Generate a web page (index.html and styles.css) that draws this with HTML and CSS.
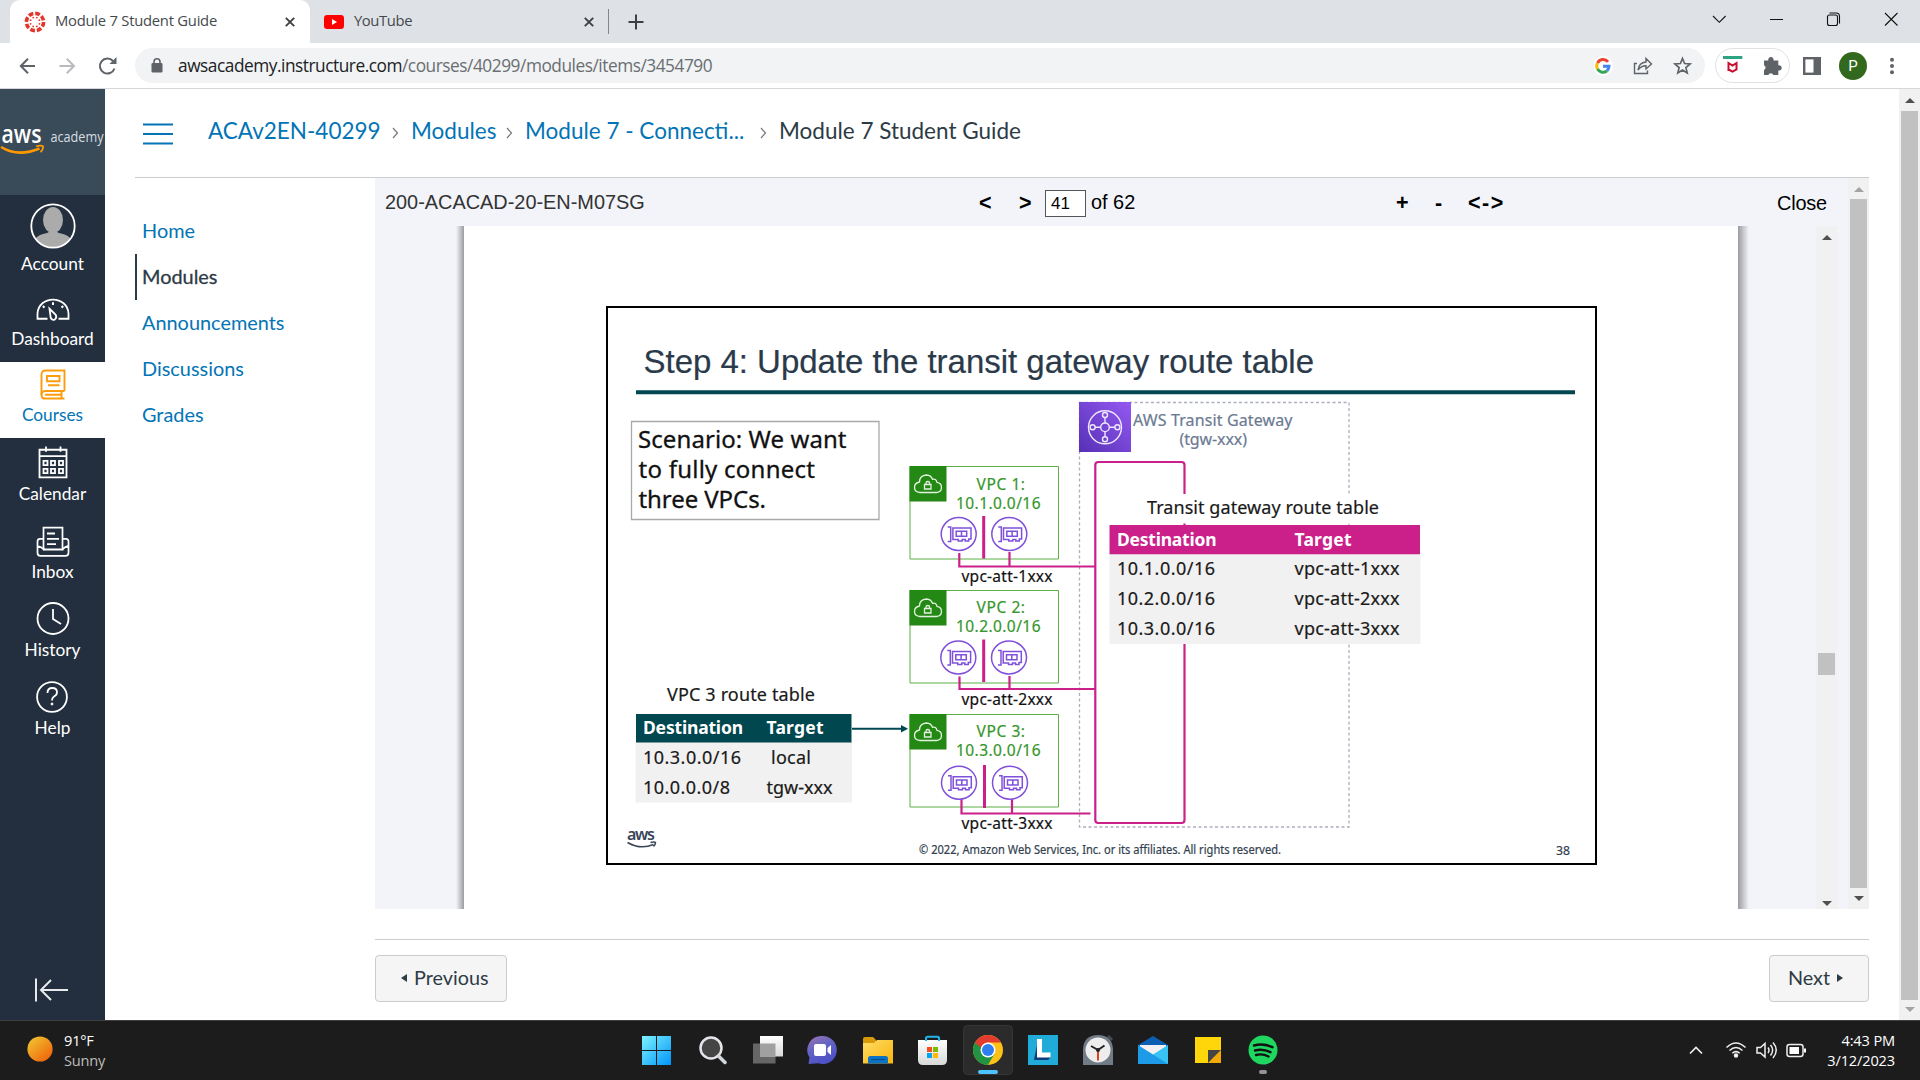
FILE: index.html
```html
<!DOCTYPE html>
<html lang="en">
<head>
<meta charset="utf-8">
<title>Module 7 Student Guide</title>
<link rel="stylesheet" href="styles.css">
</head>
<body>
<div class="screen">
  <header class="tabstrip">
    <div class="tab tab-active">
      <svg class="fav" width="22" height="22" viewBox="-11 -11 22 22" fill="#e5352b"><circle r="8.6" fill="none" stroke="#e5352b" stroke-width="3.6" stroke-dasharray="4.75 2"/><circle cx="4.4" cy="1.8" r=".9"/><circle cx="1.8" cy="4.4" r=".9"/><circle cx="-1.8" cy="4.4" r=".9"/><circle cx="-4.4" cy="1.8" r=".9"/><circle cx="-4.4" cy="-1.8" r=".9"/><circle cx="-1.8" cy="-4.4" r=".9"/><circle cx="1.8" cy="-4.4" r=".9"/><circle cx="4.4" cy="-1.8" r=".9"/></svg>
      <span class="tab-title t1">Module 7 Student Guide</span>
      <svg class="x" width="10" height="10" viewBox="0 0 10 10"><path d="M.8.8l8.4 8.4M9.2.8L.8 9.2" stroke="#3c4043" stroke-width="1.9"/></svg>
    </div>
    <div class="tab tab-yt">
      <svg width="20" height="14" viewBox="0 0 20 14"><rect width="20" height="14" rx="3.2" fill="#f00"/><path d="M8 4l5 3-5 3z" fill="#fff"/></svg>
      <span class="tab-title t2">YouTube</span>
      <svg class="x" width="10" height="10" viewBox="0 0 10 10"><path d="M.8.8l8.4 8.4M9.2.8L.8 9.2" stroke="#3c4043" stroke-width="1.9"/></svg>
    </div>
    <i class="tab-sep"></i>
    <svg class="plus" width="16" height="16" viewBox="0 0 16 16"><path d="M8 .5v15M.5 8h15" stroke="#3c4043" stroke-width="2"/></svg>
    <svg class="winbtns" width="190" height="20" viewBox="0 0 190 20" fill="none" stroke="#111" stroke-width="1.1"><path d="M3 7l6.300 6.300L15.600 7M60 10.500h13M175 4l12.500 12.500M187.500 4L175 16.500"/><rect x="117.500" y="6" width="10" height="10.500" rx="2"/><path d="M119.500 4h6.500q3.500 0 3.500 3.500v7"/></svg>
  </header>

  <div class="toolbar">
    <svg class="navbtns" width="100" height="20" viewBox="0 0 100 20" fill="none" stroke="#5f6368" stroke-width="2"><path d="M17 10H3M10 2.800L2.800 10l7.200 7.200"/><path stroke="#b9bbbe" d="M41.500 10h14M48.800 2.800l7.200 7.200-7.200 7.200"/><path d="M96.500 12.500A7.500 7.500 0 1 1 95 5"/><path d="M98.500 1v7h-7z" fill="#5f6368" stroke="none"/></svg>
    <div class="omnibox">
      <svg width="12" height="15" viewBox="0 0 12 15"><rect x=".5" y="5" width="11" height="9.500" rx="1.300" fill="#5f6368"/><path d="M3 6V3.800a3 3 0 0 1 6 0V6" fill="none" stroke="#5f6368" stroke-width="1.600"/></svg>
      <span class="url">awsacademy.instructure.com<em>/courses/40299/modules/items/3454790</em></span>
      <svg class="omni-icons" width="106" height="22" viewBox="1594 55 106 22" fill="none"><circle cx="1603" cy="66" r="10" fill="#fff"/><g stroke-width="3"><path d="M1608 61.800A6.200 6.200 0 0 0 1597.500 63" stroke="#ea4335"/><path d="M1597.500 63a6.200 6.200 0 0 0 0 6" stroke="#fbbc05"/><path d="M1597.500 69a6.200 6.200 0 0 0 9.500 1.800" stroke="#34a853"/><path d="M1607 70.800a6.200 6.200 0 0 0 2-4.500h-6" stroke="#4285f4"/></g><g stroke="#5f6368" stroke-width="1.400"><path d="M1637 63.500h-2.500V73.500h13v-3"/><path d="M1638 70q1-7.500 8-8v-3.500l5.500 5.500-5.500 5v-3.300q-5 0-8 4.300z"/></g><path stroke="#5f6368" stroke-width="1.700" d="M1682.500 58.500l2.100 5 5.500.5-4.200 3.600 1.300 5.300-4.700-2.800-4.700 2.800 1.300-5.300-4.200-3.600 5.500-.5z"/></svg>
    </div>
    <div class="ext-pill">
      <svg width="60" height="22" viewBox="1723 54 60 22"><rect x="1722.500" y="55" width="20" height="3" rx="1" fill="#2ea384"/><path d="M1728.500 70v-8l4 2.500 4-2.500v6.500l-4 2.200-4-2.200" fill="none" stroke="#c8102e" stroke-width="2"/><path fill="#5f6368" d="M1764 59.500h4.300a2.700 2.700 0 1 1 5.200 0h4.800v4.800a2.700 2.700 0 1 1 0 5.200v4.500h-5a2.700 2.700 0 0 0-5 0h-4.300v-5a2.600 2.600 0 0 0 0-4.800z"/></svg>
    </div>
    <svg class="side" width="18" height="18" viewBox="0 0 18 18"><rect x="1.200" y="1.200" width="15.600" height="15.600" fill="#fff" stroke="#5f6368" stroke-width="2.400"/><path d="M10.500 1H17v16h-6.500z" fill="#5f6368"/></svg>
    <span class="avatar">P</span>
    <svg class="dots" width="6" height="18" viewBox="0 0 6 18" fill="#5f6368"><circle cx="3" cy="2.700" r="2"/><circle cx="3" cy="9" r="2"/><circle cx="3" cy="15.300" r="2"/></svg>
  </div>

  <div class="page">
    <nav class="global">
      <div class="logo"><svg width="105" height="106" viewBox="0 89 105 106"><text x="1.500" y="142.500" textLength="40" lengthAdjust="spacingAndGlyphs" class="logo-aws">aws</text><text x="50.500" y="142" textLength="53" lengthAdjust="spacingAndGlyphs" class="logo-ac">academy</text><path d="M1 147q17 10.500 38.500 1.500" fill="none" stroke="#f90" stroke-width="2.600"/><path d="M36 146.300q5-1.500 7 0 .5 2.500-2.500 6" fill="none" stroke="#f90" stroke-width="1.700"/></svg></div>
      <a class="gi g-account"><svg width="46" height="46" viewBox="0 0 46 46"><defs><clipPath id="av"><circle cx="23" cy="23" r="21.500"/></clipPath></defs><g clip-path="url(#av)" fill="#ababab"><ellipse cx="23" cy="17" rx="10" ry="13"/><path d="M3 46q-1-13 12-15.500 5-1 5-4h6q0 3 5 4Q44 33 43 46z"/></g><circle cx="23" cy="23" r="21.700" fill="none" stroke="#fff" stroke-width="1.800"/></svg><span>Account</span></a>
      <a class="gi g-dash"><svg width="34" height="23.500" viewBox="0 0 34 22" preserveAspectRatio="none" fill="none" stroke="#fff" stroke-width="1.800"><path d="M11.500 19.500H1.500V14.500C2 6.500 9 1.500 17 1.500s15 5 15.500 13v5H22.500"/><path d="M13.500 10l6 5.500q1.800 2.800-.8 4.700-2.800 1-4-1.700z"/><path d="M17 4v2.500M6.800 7.500l1.700 1.500M27.200 7.500L25.500 9" stroke-width="2"/></svg><span>Dashboard</span></a>
      <a class="gi g-courses"><svg width="26" height="31" viewBox="0 0 26 29" preserveAspectRatio="none" fill="none" stroke="#fc9d0d" stroke-width="1.900"><path d="M24.500 20.500V1.500H5.500Q1.500 1.500 1.500 5.500V24.500"/><path d="M24.500 20.500H5.500Q1.500 20.500 1.500 24.300T5.500 27.500H24.500M21.500 21v6.500M5 24h16M7 6.500h12.500v5H7zM8 15.200h11.500"/></svg><span>Courses</span></a>
      <a class="gi g-cal"><svg width="30" height="33" viewBox="0 0 30 31" preserveAspectRatio="none" fill="none" stroke="#fff" stroke-width="1.800"><path d="M1.500 3.500H28.500v26H1.500zM1.500 9.500h27M8 .5v5M22.500.5v5"/><path d="M5.500 14h4v4h-4zM13 14h4v4h-4zM21 14h4v4h-4zM5.500 21.500h4v4h-4zM13 21.500h4v4h-4zM21 21.500h4v4h-4z"/></svg><span>Calendar</span></a>
      <a class="gi"><svg width="34" height="31" viewBox="0 0 34 29" preserveAspectRatio="none" fill="none" stroke="#fff" stroke-width="1.700"><path d="M7.500 20V1.500h19V22H8zM11 7h8M11 12h12M11 17h9"/><path d="M7 12H4Q1.500 12 1.500 14.500V25Q1.500 28 4.500 28h25q3 0 3-3V14.500Q32.500 12 30 12H27M1.500 18.500Q6 19.500 8.500 22.500M32.500 18.500Q28 19.500 26 22.500"/></svg><span>Inbox</span></a>
      <a class="gi"><svg width="34" height="33" viewBox="0 0 34 33" fill="none" stroke="#fff" stroke-width="1.800"><circle cx="17" cy="16.500" r="15.500"/><path d="M17 7v10l8 5"/></svg><span>History</span></a>
      <a class="gi g-help"><svg width="32" height="32" viewBox="0 0 32 32" fill="none" stroke="#fff" stroke-width="1.800"><circle cx="16" cy="16" r="14.900"/><path d="M11.500 12q0-5 4.800-5 4.700 0 4.700 4.300 0 2.700-3 4.200-2 1.200-2 4"/><circle cx="16" cy="23" r="1" fill="#fff" stroke-width="1"/></svg><span>Help</span></a>
      <svg class="collapse" width="34" height="24" viewBox="0 0 34 24" fill="none" stroke="#e8eaec" stroke-width="2"><path d="M2 .5v23M34 12H7M17 2L7 12l10 10"/></svg>
    </nav>

    <main class="main">
      <div class="crumbs">
        <svg class="burger" width="30" height="22" viewBox="0 0 30 22" stroke="#0374b5" stroke-width="1.800"><path d="M0 1.500h30M0 11h30M0 20.500h30"/></svg>
        <a class="c1">ACAv2EN-40299</a><svg class="sep" width="7" height="12" viewBox="0 0 7 12"><path d="M1 1l4.500 5L1 11" fill="none" stroke="#777" stroke-width="1.200"/></svg>
        <a class="c2">Modules</a><svg class="sep" width="7" height="12" viewBox="0 0 7 12"><path d="M1 1l4.500 5L1 11" fill="none" stroke="#777" stroke-width="1.200"/></svg>
        <a class="c3">Module 7 - Connecti...</a><svg class="sep" width="7" height="12" viewBox="0 0 7 12"><path d="M1 1l4.500 5L1 11" fill="none" stroke="#777" stroke-width="1.200"/></svg>
        <b class="c4">Module 7 Student Guide</b>
      </div>
      <div class="body">
        <nav class="course"><a>Home</a><a class="on">Modules</a><a>Announcements</a><a>Discussions</a><a>Grades</a></nav>
        <section class="content">
          <div class="viewer">
            <div class="doc">
              <div class="docbar"><span class="name">200-ACACAD-20-EN-M07SG</span><span class="lt">&lt;</span><span class="gt">&gt;</span><span class="pg">41</span><span class="of">of 62</span><span class="pl">+</span><span class="mi">-</span><span class="fit">&lt;-&gt;</span><span class="close">Close</span></div>
              <div class="docview">
                <i class="shadow-l"></i>
                <svg class="slide" width="1274" height="683" viewBox="464 226 1274 683">
                  <defs>
                    <linearGradient id="tg" x1="0" y1="1" x2="1" y2="0"><stop offset="0" stop-color="#5630b5"/><stop offset="1" stop-color="#9459f2"/></linearGradient>
                    <g id="eni" fill="none" stroke="#8050db" stroke-width="1.500"><ellipse rx="17.500" ry="16.500" fill="#fff"/><path d="M-11-7h3v14.500h-3M-5.800-6H12.300V5H10v2H6.500V5.500H3.500V7H-.5V5.500H-5.800z"/><path d="M-2.500-2.800H8V2.200H-2.500zM2.800-3v5"/></g>
                    <g id="vpc"><path d="M.5.500h148.500v92.500H.5z" fill="#fff" stroke="#5cb044"/><path d="M0 0h37v35.500H0z" fill="#248814"/><g fill="none" stroke="#e2f2df" stroke-width="1.300"><path d="M10.500 26.500H27q5-.5 5-5t-4.500-5.200q-1-4-4.500-3-1.500-4-6-4.300-7 .5-7 7-5 1-5 5.500 0 4.500 5.500 5z"/><path d="M15 18.500h6.500v4.500H15zM16.500 18.500v-1.200q0-1.800 1.800-1.800t1.800 1.800v1.200"/></g></g>
                  </defs>
                  <rect x="607" y="307" width="989" height="557" fill="#fff" stroke="#000" stroke-width="2"/>
                  <text class="title" x="643.500" y="373" textLength="670.500">Step 4: Update the transit gateway route table</text>
                  <path d="M636 392.300h939" stroke="#00474f" stroke-width="4"/>
                  <path d="M631.500 421.500h247.500v98h-247.500z" fill="none" stroke="#a9a9a9" stroke-width="1.300"/>
                  <g class="scen"><text x="638" y="448" textLength="208.500">Scenario: We want</text><text x="638.500" y="478" textLength="176.500">to fully connect</text><text x="638.500" y="508" textLength="127.500">three VPCs.</text></g>
                  <path d="M1079.500 402.500h269.500v424.500h-269.500z" fill="none" stroke="#aab0bd" stroke-width="1.300" stroke-dasharray="3 2.500"/>
                  <use href="#vpc" x="909.500" y="466"/><use href="#vpc" x="909.500" y="590"/><use href="#vpc" x="909.500" y="714"/>
                  <g class="green"><text x="976.500" y="489.500" textLength="48.500">VPC 1:</text><text x="956" y="508.500" textLength="84.500">10.1.0.0/16</text><text x="976.500" y="613" textLength="48.500">VPC 2:</text><text x="956" y="632" textLength="84.500">10.2.0.0/16</text><text x="976.500" y="736.700" textLength="48.500">VPC 3:</text><text x="956" y="756" textLength="84.500">10.3.0.0/16</text></g>
                  <g fill="none" stroke="#cb2089"><path stroke-width="3" d="M983.700 516v42.500M983.700 639.500v42.500M984.500 765v43"/><path stroke-width="2.200" d="M959.300 553v13.500H1095M1009.500 552v14M959.500 676.500v12.500H1095M1009.500 676v13M961.500 799v14.500H1090.500M1012 799v14"/><rect x="1095.300" y="462" width="89.200" height="361" rx="3" stroke-width="2.200"/></g>
                  <use href="#eni" x="958.700" y="534"/><use href="#eni" x="1009.300" y="534"/><use href="#eni" x="958.300" y="657.500"/><use href="#eni" x="1009" y="657.500"/><use href="#eni" x="959" y="782.700"/><use href="#eni" x="1010" y="782.700"/>
                  <g class="att"><text x="961.500" y="582.300" textLength="91">vpc-att-1xxx</text><text x="961.500" y="705" textLength="91">vpc-att-2xxx</text><text x="961.500" y="829" textLength="91">vpc-att-3xxx</text></g>
                  <path d="M1079 402h52v50h-52z" fill="url(#tg)"/>
                  <g fill="none" stroke="#efe6ff" stroke-width="1.400"><circle cx="1105" cy="427.300" r="16.500"/><circle cx="1105" cy="427.300" r="4.300"/><path d="M1105 417.500v5.500M1105 431.600v5.500M1095 427.300h5.700M1109.300 427.300h5.700"/><circle cx="1105" cy="415" r="2.500"/><circle cx="1105" cy="439.300" r="2.500"/><circle cx="1092.600" cy="427.300" r="2.500"/><circle cx="1117.400" cy="427.300" r="2.500"/></g>
                  <g class="tgw"><text x="1133" y="425.500" textLength="159.500">AWS Transit Gateway</text><text x="1179.500" y="445" textLength="67.500">(tgw-xxx)</text></g>
                  <path d="M1109 494h311v29.500h-311z" fill="#fff"/>
                  <path d="M1109.500 553h311v91h-311z" fill="#f1f1f1"/><path d="M1109.500 525h310.500v29.300h-310.500z" fill="#cb2089"/>
                  <path d="M635.500 741h216.500v61.500h-216.500z" fill="#f1f1f1"/><path d="M636 714h215.500v28.500h-215.500z" fill="#00474f"/>
                  <g class="tb"><text x="1147" y="514.300" textLength="232">Transit gateway route table</text><text x="1117" y="575.300" textLength="98">10.1.0.0/16</text><text x="1117" y="605" textLength="98">10.2.0.0/16</text><text x="1117" y="635" textLength="98">10.3.0.0/16</text><text x="1294.500" y="575.300" textLength="105">vpc-att-1xxx</text><text x="1294.500" y="605" textLength="105">vpc-att-2xxx</text><text x="1294.500" y="635" textLength="105">vpc-att-3xxx</text><text x="667" y="701.300" textLength="148">VPC 3 route table</text><text x="643" y="764" textLength="98">10.3.0.0/16</text><text x="643" y="793.500" textLength="87">10.0.0.0/8</text><text x="771" y="764" textLength="40">local</text><text x="766.500" y="793.500" textLength="66">tgw-xxx</text></g>
                  <g class="th"><text x="1117" y="546" textLength="99.500">Destination</text><text x="1294.500" y="546" textLength="57">Target</text><text x="643" y="733.500" textLength="100">Destination</text><text x="766.500" y="733.500" textLength="57">Target</text></g>
                  <path d="M852 728.700h50" stroke="#00474f" stroke-width="2"/><path d="M901 725l7 3.700-7 3.700z" fill="#00474f"/>
                  <text class="mini" x="627" y="840" textLength="28">aws</text><path d="M627.500 842.500q13 7.500 26 2M650.500 842.500q4-1 5 0 0 2-2 4" fill="none" stroke="#3a4557" stroke-width="1.500"/>
                  <g class="foot"><text x="919" y="854.300" textLength="362" lengthAdjust="spacingAndGlyphs">© 2022, Amazon Web Services, Inc. or its affiliates. All rights reserved.</text><text x="1556" y="855" textLength="14" lengthAdjust="spacingAndGlyphs">38</text></g>
                </svg>
                <i class="shadow-r"></i>
                <div class="sb sb-doc"><i class="up"></i><i class="thumb"></i><i class="down"></i></div>
              </div>
            </div>
            <div class="sb sb-frame"><i class="up dim"></i><i class="thumb"></i><i class="down"></i></div>
          </div>
          <footer class="pager"><a class="btn prev"><i></i><span>Previous</span></a><a class="btn next"><span>Next</span><i></i></a></footer>
        </section>
      </div>
    </main>
    <div class="sb sb-page"><i class="up"></i><i class="thumb"></i><i class="down dim"></i></div>
  </div>

  <footer class="taskbar">
    <svg class="sun" width="26" height="26" viewBox="0 0 26 26"><defs><linearGradient id="sn" x1=".1" y1=".1" x2=".8" y2=".9"><stop offset="0" stop-color="#f0c030"/><stop offset="1" stop-color="#f06a0c"/></linearGradient></defs><circle cx="13" cy="13" r="12.600" fill="url(#sn)"/></svg>
    <div class="weather"><span>91°F</span><span class="dimtx">Sunny</span></div>
    <svg class="apps" width="640" height="59" viewBox="640 1021 640 59">
      <defs><linearGradient id="w" gradientUnits="userSpaceOnUse" x1="642" y1="1036" x2="671" y2="1065"><stop offset="0" stop-color="#7df3ff"/><stop offset="1" stop-color="#0094f8"/></linearGradient><linearGradient id="tv" x1="0" y1="0" x2="0" y2="1"><stop offset="0" stop-color="#fff"/><stop offset="1" stop-color="#d8d8d8"/></linearGradient><linearGradient id="ch" x1="0" y1="0" x2=".5" y2="1"><stop offset="0" stop-color="#a074b0"/><stop offset=".5" stop-color="#6264c4"/><stop offset="1" stop-color="#4e50c8"/></linearGradient><linearGradient id="fo" x1="0" y1="0" x2="1" y2="1"><stop offset="0" stop-color="#ffdc66"/><stop offset="1" stop-color="#f9b50c"/></linearGradient></defs>
      <path fill="url(#w)" d="M642 1036h14v14h-14zM657 1036h14v14h-14zM642 1051h14v14h-14zM657 1051h14v14h-14z"/>
      <circle cx="711" cy="1048" r="10.500" fill="#454545" stroke="#e3e5ea" stroke-width="2.500"/><path d="M718.500 1056l6.500 6.500" stroke="#d4d7de" stroke-width="3.500" stroke-linecap="round"/>
      <path d="M753 1043.500h22.500v20H753z" fill="#666"/><path d="M760 1036h23v20.500h-23z" fill="url(#tv)"/><path d="M760 1043.500h15.500v13H760z" fill="#a0a0a0"/>
      <path d="M822.500 1036a14 14 0 1 1-4 27.300L808.500 1064l1-6.500A14 14 0 0 1 822.500 1036z" fill="url(#ch)"/><rect x="814" y="1044" width="12" height="12" rx="2" fill="#fff"/><path d="M827.500 1048l3.500-3v10l-3.500-3z" fill="#fff"/>
      <path d="M863 1039q0-2 2-2h8l3 3v6h-13z" fill="#d99a0a"/><path d="M863 1043h11l3-3h16v23.500h-30z" fill="url(#fo)"/><path d="M868 1063.500v-5q0-2.500 2.500-2.500h15q2.500 0 2.500 2.500v5z" fill="#0b72c4"/><path d="M871 1059.500h14" stroke="#07508f" stroke-width="1.200"/>
      <path d="M918 1040h29v20q0 5-5 5h-19q-5 0-5-5z" fill="url(#tv)"/><path d="M926 1041v-2.500q0-1.800 1.800-1.800h9.500q1.800 0 1.800 1.800v2.500" fill="none" stroke="#20b4ea" stroke-width="2"/><path fill="#f25022" d="M927 1047h5v5h-5z"/><path fill="#7fba00" d="M933 1047h5v5h-5z"/><path fill="#00a4ef" d="M927 1053h5v5h-5z"/><path fill="#ffb900" d="M933 1053h5v5h-5z"/>
      <rect x="963.500" y="1025.500" width="49" height="49" rx="4" fill="#2b2b2b" stroke="#363636"/>
      <circle cx="988" cy="1050" r="15" fill="#fbc117"/><path d="M975 1042.500A15 15 0 0 0 988 1065l6.500-11.200-6.500-3.800z" fill="#229342"/><path d="M975 1042.500A15 15 0 0 1 1001 1042.500H988l-6 6z" fill="#e33b2e"/><circle cx="988" cy="1050" r="7.500" fill="#fff"/><circle cx="988" cy="1050" r="6" fill="#2d7ff0"/><rect x="978" y="1070" width="20" height="4" rx="2" fill="#4cc2ff"/>
      <path d="M1028 1035h30v30h-30z" fill="#21abd9"/><path d="M1038 1040l-4 20h14l3-3h-10z" fill="#0b3d7e"/><path d="M1037 1039h5v13.500h8.500v5h-13.500z" fill="#fff"/>
      <path d="M1083 1049q1-14 15-14 14 0 15 14v16h-30z" fill="#717c87"/><path d="M1107 1037l2-2 4 4-2 2z" fill="#454b52"/><circle cx="1098" cy="1050" r="12.500" fill="#ededed"/><path d="M1098 1050l-7-4M1098 1050l6.500-4.500" stroke="#222" stroke-width="2"/><path d="M1098 1051v9.500" stroke="#e0421e" stroke-width="2"/><circle cx="1098" cy="1050" r="2" fill="#222"/>
      <path d="M1138 1045l15-9 15 9v4h-30z" fill="#0a5fb0"/><path d="M1140 1045h26v13h-26z" fill="#f2f2f2"/><path d="M1168 1045l-30 19h30z" fill="#38c3f5"/><path d="M1138 1045l30 19h-30z" fill="#1e9be8"/>
      <path d="M1195 1037h26v13l-13 13h-13z" fill="#ffd60a"/><path d="M1208 1050h13l-13 13z" fill="#444"/><path d="M1221 1050v13h-13z" fill="#f2a90a"/>
      <circle cx="1263" cy="1050" r="14.500" fill="#1fd760"/><path d="M1254 1045.500q9.500-2.500 18.500 1.700M1255 1050.500q8-2 15.500 1.700M1256 1055q6.500-1.700 12.500 1.500" fill="none" stroke="#111" stroke-width="2.400" stroke-linecap="round"/><rect x="1259" y="1070" width="8" height="4" rx="2" fill="#949494"/>
    </svg>
    <svg class="tray" width="120" height="20" viewBox="1688 1040 120 20" fill="none" stroke="#eee" stroke-width="1.700"><path d="M1690 1053.500l6-6 6 6"/><g stroke-width="1.500"><path d="M1726.500 1047.500q9.500-9 19 0M1729.500 1050.500q6.500-6 13 0M1732.300 1053.300q3.700-3.400 7.400 0"/><circle cx="1736" cy="1055.500" r="1.500" fill="#fff"/><path d="M1757 1047.500h3.500l4.500-4v13.500l-4.500-4h-3.500zM1768 1047.500q2 2.700 0 5.500M1770.500 1045q4.300 5 0 10.500M1773 1042.500q6.500 7.500 0 15.500"/><rect x="1787" y="1044.500" width="16" height="12" rx="2.500"/></g><path d="M1789.500 1047h9.500v7h-9.500zM1804 1048.500h2v4h-2z" fill="#fff" stroke="none"/></svg>
    <div class="clock"><span class="tm">4:43 PM</span><span class="dt">3/12/2023</span></div>
  </footer>
</div>
</body>
</html>
```
FILE: styles.css
```css
* { box-sizing: border-box; }
body { margin: 0; background: #fff; }
svg { display: block; flex: none; }
i, em, b { font-style: normal; font-weight: normal; }
.screen { width: 1920px; height: 1080px; display: flex; flex-direction: column; overflow: hidden; font-family: "Open Sans", sans-serif; }
.screen span, .screen a { white-space: nowrap; flex: none; }

/* tab strip */
.tabstrip { height: 43px; background: #dee1e6; display: flex; align-items: center; flex: none; }
.tab { height: 43px; display: flex; align-items: center; }
.tab-active { margin-left: 10px; width: 300px; background: #fff; border-radius: 10px 10px 0 0; padding-left: 14px; }
.tab-title { font-size: 14.800px; color: #45494d; line-height: 20px; padding-bottom: 3px; }
.t1 { width: 229px; margin-left: 9px; letter-spacing: -0.250px; }
.tab-active .x { margin-left: 1px; }
.tab-yt { padding-left: 14px; width: 298px; }
.t2 { width: 230px; margin-left: 10px; letter-spacing: -0.400px; }
.tab-sep { width: 1px; height: 25px; background: #80868b; }
.plus { margin-left: 19px; }
.winbtns { margin: -6px 0 0 1066px; }

/* address bar */
.toolbar { height: 46px; flex: none; border-bottom: 1px solid #d5d7da; display: flex; align-items: center; }
.navbtns { margin-left: 18px; }
.omnibox { margin-left: 17px; width: 1570px; height: 35px; border-radius: 18px; background: #f1f3f4; display: flex; align-items: center; padding-left: 16px; }
.url { width: 1416px; margin-left: 15px; font-size: 17.300px; letter-spacing: -0.470px; color: #202124; line-height: 24px; }
.url em { color: #6a6e73; }
.ext-pill { width: 75px; height: 35px; border: 1px solid #dfe1e4; border-radius: 18px; margin-left: 10px; display: flex; align-items: center; justify-content: center; }
.side { margin-left: 13px; }
.avatar { width: 28px; height: 28px; border-radius: 50%; background: #33691e; color: #fff; font: 15px/28px Roboto, sans-serif; text-align: center; margin-left: 18px; }
.dots { margin-left: 22px; }

/* page */
.page { height: 931px; flex: none; display: flex; font-family: Lato, sans-serif; }
.global { width: 105px; background: #232f3e; display: flex; flex-direction: column; flex: none; }
.logo { height: 106px; background: #394b58; flex: none; }
.logo-aws { font: 600 25px "Open Sans", sans-serif; fill: #fff; }
.logo-ac { font: 14.500px "Open Sans", sans-serif; fill: #d8dde1; }
.gi { height: 78px; display: flex; flex-direction: column; align-items: center; justify-content: flex-end; color: #fff; font-size: 17.300px; line-height: 20px; padding-bottom: 13px; flex: none; }
.gi svg { margin-bottom: 5px; }
.g-account { height: 92px; }
.g-dash { height: 75px; }
.gi.g-dash svg { margin-bottom: 8px; }
.g-courses { height: 76px; background: #fff; color: #0374b5; }
.g-cal { height: 79px; }
.g-help svg { margin-right: 2px; }
.collapse { margin: 227px 0 0 34px; }

.main { width: 1764px; margin-right: 30px; padding-left: 30px; flex: none; }
.crumbs { height: 89px; border-bottom: 1px solid #c7cdd1; display: flex; align-items: center; padding: 0 0 5px 8px; font-size: 22.500px; line-height: 28px; color: #0374b5; }
.crumbs .burger { margin: 6px 35px 0 0; }
.sep { margin: 5px 12px 0 0; }
.c1 { width: 184px; }
.c2 { width: 95px; }
.c3 { width: 235px; }
.c4 { color: #2d3b45; }
.c1, .c2, .c3, .c4 { white-space: nowrap; }
.body { display: flex; }
.course { width: 240px; padding-top: 30px; display: flex; flex-direction: column; flex: none; }
.course a { height: 46px; padding-left: 7px; font-size: 19.900px; line-height: 44px; color: #0374b5; }
.course .on { color: #2d3b45; border-left: 2px solid #2d3b45; padding-left: 5px; -webkit-text-stroke: .3px #2d3b45; }

/* viewer */
.viewer { width: 1494px; height: 731px; display: flex; background: #f2f4f9; }
.doc { width: 1473px; }
.docbar { height: 48px; display: flex; align-items: center; padding-left: 10px; font-family: "Liberation Sans", Arial, sans-serif; font-size: 19.900px; color: #000; line-height: 24px; }
.name { width: 594px; color: #333; }
.lt { width: 40px; }
.gt { width: 26px; }
.lt, .gt, .pl, .mi, .fit { font-weight: bold; font-size: 21.500px; padding-top: 1px; }
.pg { width: 41px; height: 27px; background: #fff; border: 1px solid #555; font-size: 17px; line-height: 26px; padding-left: 5px; margin-top: 2px; }
.of { margin-left: 5px; width: 305px; }
.pl { width: 39px; }
.mi { width: 33px; }
.fit { width: 309px; letter-spacing: 1.500px; }
.close { padding-top: 2px; letter-spacing: -.200px; }
.docview { height: 683px; display: flex; }
.shadow-l { width: 8px; margin-left: 81px; background: linear-gradient(to left, #9b9ca1, #f2f4f9); }
.slide { background: #fff; }
.shadow-r { width: 11px; background: linear-gradient(to right, #9b9ca1, #f2f4f9); }
.title { font: 33px "Liberation Sans", Arial, sans-serif; fill: #2b3a4a; stroke: #2b3a4a; stroke-width: .2px; }
.scen { font: 24px "Noto Sans", sans-serif; fill: #111; stroke: #111; stroke-width: .3px; }
.green { font: 15.500px "Noto Sans", sans-serif; fill: #35962a; stroke: #35962a; stroke-width: .2px; }
.att { font: 15.500px "Noto Sans", sans-serif; fill: #111; stroke: #111; stroke-width: .2px; }
.tgw { font: 16px "Noto Sans", sans-serif; fill: #6b7a92; stroke: #6b7a92; stroke-width: .2px; }
.tb { font: 18px "Noto Sans", sans-serif; fill: #1a1a1a; stroke: #1a1a1a; stroke-width: .2px; }
.th { font: bold 17.500px "Noto Sans", sans-serif; fill: #fff; }
.mini { font: 600 16px "Noto Sans", sans-serif; fill: #3a4557; }
.foot { font: 12px "Noto Sans", sans-serif; fill: #333f50; stroke: #333f50; stroke-width: .2px; }

/* scroll bars */
.sb { width: 21px; background: #f1f1f1; display: flex; flex-direction: column; align-items: center; flex: none; }
.sb .thumb { width: 17px; background: #c1c1c1; }
.up { border: 5px solid transparent; border-top: 0; border-bottom: 5px solid #505050; }
.down { border: 5px solid transparent; border-bottom: 0; border-top: 5px solid #505050; }
.up.dim { border-bottom-color: #a3a3a3; }
.down.dim { border-top-color: #a3a3a3; }
.sb-doc { margin-left: 67px; }
.sb-doc .up { margin-top: 9px; }
.sb-doc .thumb { height: 22px; margin: 413px 0 226px; }
.sb-frame .up { margin-top: 9px; }
.sb-frame .thumb { height: 689px; margin: 7px 0 8px; }
.sb-page .up { margin-top: 9px; }
.sb-page .thumb { height: 889px; margin: 8px 0 7px; }

/* pager */
.pager { margin-top: 30px; border-top: 1px solid #c7cdd1; padding-top: 15px; display: flex; justify-content: space-between; }
.btn { height: 47px; border: 1px solid #c7cdd1; border-radius: 4px; background: #f5f5f5; display: flex; align-items: center; font-size: 19.800px; line-height: 24px; color: #2d3b45; padding-bottom: 4px; }
.prev { width: 132px; padding-left: 25px; }
.prev i { border: 4px solid transparent; border-left: 0; border-right: 6px solid #2d3b45; margin: 3px 7px 0 0; }
.next { width: 100px; padding-left: 18px; }
.next i { border: 4px solid transparent; border-right: 0; border-left: 6px solid #2d3b45; margin: 3px 0 0 7px; }

/* taskbar */
.taskbar { height: 60px; background: #1c1c1c; border-top: 1px solid #3e4040; display: flex; color: #fff; font-size: 14.600px; line-height: 20px; flex: none; }
.sun { margin: 15px 0 0 27px; }
.weather { width: 587px; padding: 9px 0 0 11px; display: flex; flex-direction: column; letter-spacing: -.200px; flex: none; }
.dimtx { color: #bdbdbd; }
.tray { margin: 19px 0 0 408px; }
.clock { width: 87px; padding-top: 9px; display: flex; flex-direction: column; align-items: flex-end; letter-spacing: -.150px; flex: none; }
```
